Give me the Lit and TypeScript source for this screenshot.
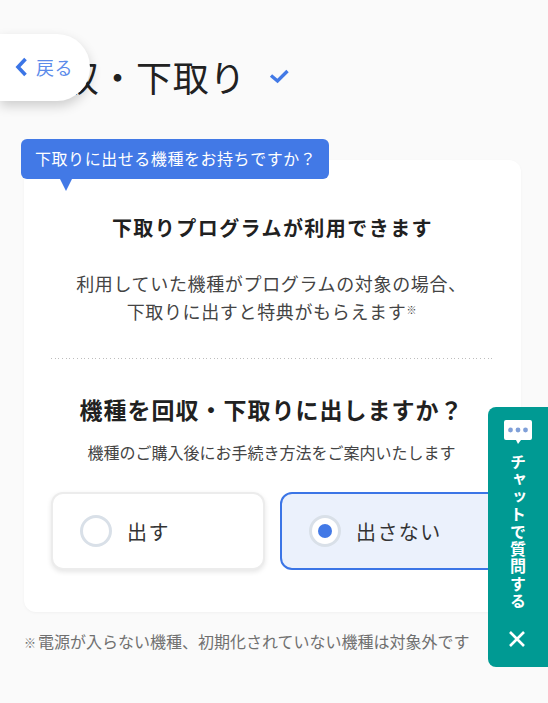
import { LitElement, html, css } from "lit";
import { customElement } from "lit/decorators.js";

@customElement("app-root")
export class AppRoot extends LitElement {
  static styles = css`
    :host {
      display: block;
      position: relative;
      width: 548px;
      height: 703px;
      overflow: hidden;
      background: #fafafa;
      font-family: "Noto Sans CJK JP", "Noto Sans", sans-serif;
      color: #212121;
    }
    .title-row {
      display: flex;
      align-items: center;
      padding: 50px 0 0 26px;
      height: 56px;
    }
    h1 {
      margin: 0 0 4px;
      font-size: 36px;
      line-height: 54px;
      font-weight: 400;
      letter-spacing: 0.7px;
      white-space: nowrap;
    }
    .check { margin-left: 23px; width: 20px; height: 16px; margin-bottom: 4px; }
    .back {
      position: absolute;
      left: 0;
      top: 34px;
      width: 90px;
      height: 67px;
      box-sizing: border-box;
      padding: 0 0 2px 15px;
      display: flex;
      align-items: center;
      gap: 8px;
      background: #fff;
      border-radius: 0 33px 33px 0;
      box-shadow: 0 5px 12px rgba(0, 0, 0, 0.18);
      color: #5c8bea;
      font-size: 18px;
      letter-spacing: 0.5px;
    }
    .back svg { width: 13px; height: 20px; }
    .main { position: relative; padding: 54px 27px 0 24px; }
    .card {
      background: #fff;
      border-radius: 12px;
      height: 452px;
      box-sizing: border-box;
      padding: 53px 29px 0 27px;
      box-shadow: 0 1px 3px rgba(0, 0, 0, 0.04);
      text-align: center;
    }
    .tip {
      position: absolute;
      left: 21px;
      top: 33px;
      width: 308px;
      height: 40px;
      box-sizing: border-box;
      background: #4279e6;
      color: #fff;
      border-radius: 6px;
      font-size: 16px;
      letter-spacing: 0.55px;
      line-height: 38px;
      padding-left: 14px;
      white-space: nowrap;
    }
    .tip::after {
      content: "";
      position: absolute;
      left: 39px;
      top: 40px;
      border-style: solid;
      border-width: 12px 6px 0 6px;
      border-color: #4279e6 transparent transparent transparent;
    }
    h2 {
      margin: 0;
      padding-left: 2px;
      font-size: 20px;
      line-height: 30px;
      letter-spacing: 1.45px;
      font-weight: 700;
    }
    .lead {
      margin: 26px 0 0;
      font-size: 18px;
      line-height: 28px;
      letter-spacing: 0.65px;
      color: #444;
    }
    .lead sup { font-size: 10px; line-height: 0; vertical-align: 5px; letter-spacing: 0; }
    .divider {
      height: 1px;
      margin: 33px 0 0;
      background: repeating-linear-gradient(to right, #bdbdbd 0 1px, transparent 1px 3.7px);
    }
    h3 {
      margin: 32px 0 0;
      font-size: 23px;
      line-height: 36px;
      letter-spacing: 1px;
      font-weight: 700;
    }
    .sub {
      margin: 13px 0 0;
      font-size: 16px;
      line-height: 24px;
      color: #444;
    }
    .options {
      display: flex;
      gap: 15px;
      margin: 28px -8px 0 0;
    }
    .opt {
      flex: 0 0 214px;
      height: 78px;
      box-sizing: border-box;
      display: flex;
      align-items: center;
      gap: 15px;
      padding-left: 27px;
      border: 2px solid #ececec;
      border-radius: 12px;
      background: #fff;
      box-shadow: 0 2px 5px rgba(0, 0, 0, 0.1);
      font-size: 20px;
      letter-spacing: 1.4px;
      color: #333;
    }
    .opt.on {
      flex: 0 0 222px;
      border-color: #3b75e6;
      background: #ebf1fc;
      box-shadow: none;
    }
    .radio {
      width: 32px;
      height: 32px;
      box-sizing: border-box;
      border: 3px solid #d9e0e8;
      border-radius: 50%;
      background: #fff;
      display: flex;
      align-items: center;
      justify-content: center;
    }
    .on .radio::after {
      content: "";
      width: 14px;
      height: 14px;
      border-radius: 50%;
      background: #4279e6;
    }
    .note {
      margin: 17px 0 0;
      font-size: 16px;
      line-height: 24px;
      color: #707070;
      white-space: nowrap;
    }
    .note span { font-size: 12px; margin-right: 2px; }
    .chat {
      position: absolute;
      left: 488px;
      top: 407px;
      width: 60px;
      height: 260px;
      background: #009a93;
      border-radius: 8px 0 0 8px;
      color: #fff;
      display: flex;
      flex-direction: column;
      align-items: center;
    }
    .bubble { width: 28px; height: 25px; margin-top: 13px; }
    .chat-label {
      writing-mode: vertical-rl;
      font-size: 16px;
      font-weight: 700;
      line-height: 20px;
      letter-spacing: 1.4px;
      margin-top: 9px;
      height: 157px;
    }
    .close { width: 20px; height: 20px; margin-top: 18px; margin-right: 2px; }
  `;

  render() {
    return html`
      <div class="title-row">
        <h1>回収・下取り</h1>
        <svg class="check" viewBox="0 0 20 16"><path d="M2 7.5l6.5 5.5L18.5 3" fill="none" stroke="#4279e6" stroke-width="3.4"/></svg>
      </div>
      <div class="back">
        <svg viewBox="0 0 13 20"><path d="M10.5 2L3 10l7.500 8" fill="none" stroke="#3b75e6" stroke-width="3.6"/></svg>
        <span>戻る</span>
      </div>
      <div class="main">
        <div class="card">
          <h2>下取りプログラムが利用できます</h2>
          <p class="lead">利用していた機種がプログラムの対象の場合、<br />下取りに出すと特典がもらえます<sup>※</sup></p>
          <div class="divider"></div>
          <h3>機種を回収・下取りに出しますか？</h3>
          <p class="sub">機種のご購入後にお手続き方法をご案内いたします</p>
          <div class="options">
            <div class="opt"><i class="radio"></i><span>出す</span></div>
            <div class="opt on"><i class="radio"></i><span>出さない</span></div>
          </div>
        </div>
        <div class="tip">下取りに出せる機種をお持ちですか？</div>
        <p class="note"><span>※</span>電源が入らない機種、初期化されていない機種は対象外です</p>
      </div>
      <div class="chat">
        <svg class="bubble" viewBox="0 0 28 25">
          <path d="M2 0h24a2 2 0 0 1 2 2v16a2 2 0 0 1-2 2h-9l-3 4-2-4H2a2 2 0 0 1-2-2V2a2 2 0 0 1 2-2z" fill="#fff"/>
          <circle cx="6.5" cy="10" r="2.4" fill="#7f9fd8"/><circle cx="14" cy="10" r="2.4" fill="#7f9fd8"/><circle cx="21.5" cy="10" r="2.4" fill="#7f9fd8"/>
        </svg>
        <div class="chat-label">チャットで質問する</div>
        <svg class="close" viewBox="0 0 20 20"><path d="M3 3l14 14M17 3L3 17" stroke="#fff" stroke-width="2.6" fill="none"/></svg>
      </div>
    `;
  }
}
